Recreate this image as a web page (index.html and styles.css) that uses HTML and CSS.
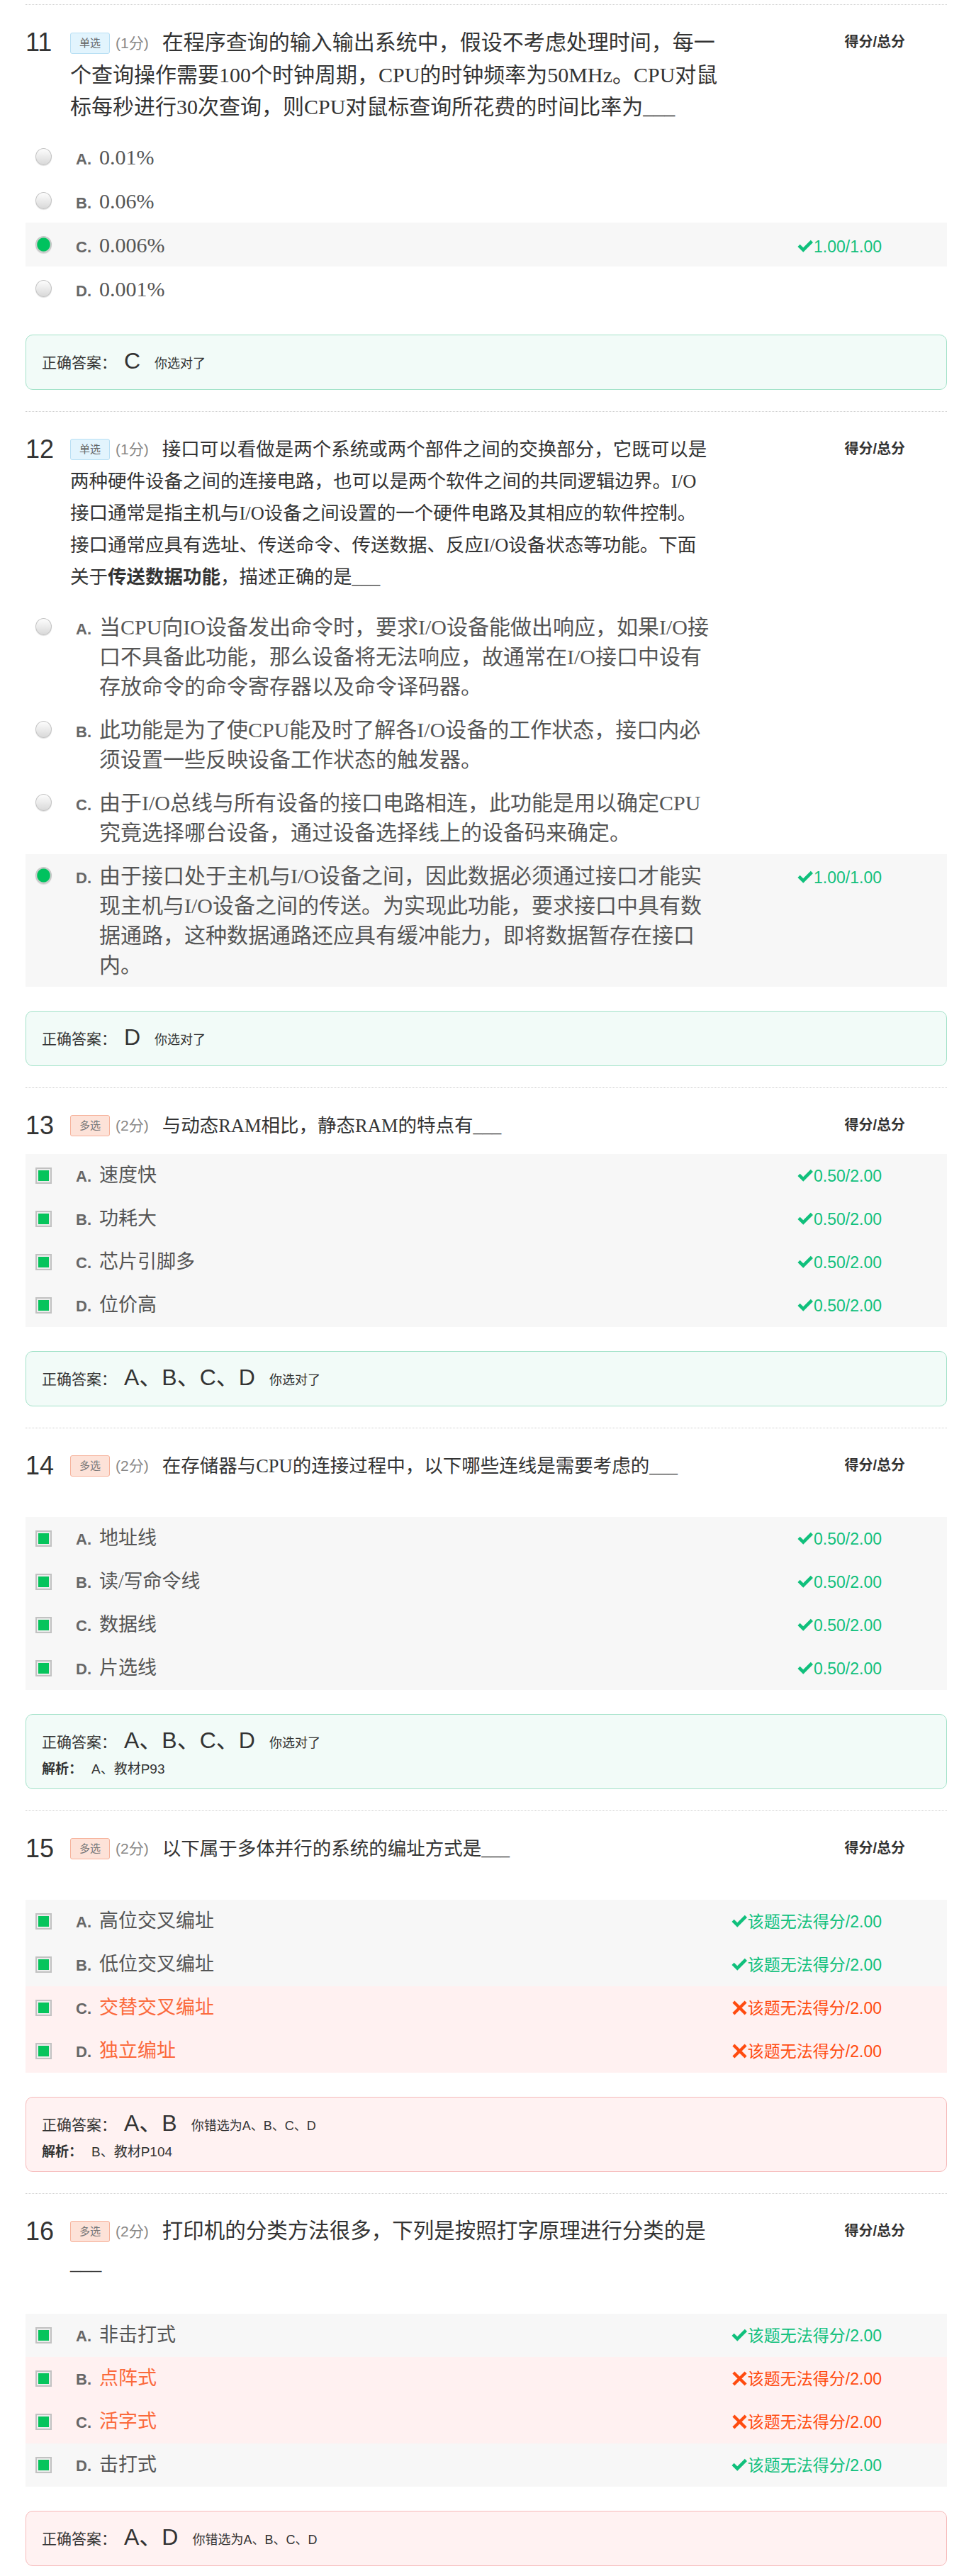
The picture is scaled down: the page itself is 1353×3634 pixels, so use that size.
FILE: index.html
```html
<!DOCTYPE html>
<html lang="zh-CN">
<head>
<meta charset="utf-8">
<title>测验结果</title>
<link rel="stylesheet" href="styles.css">
</head>
<body>
<div class="page">

  <!-- 11 -->
  <section class="question">
    <div class="q-head">
      <div class="q-num">11</div>
      <div class="q-title t30"><span class="badge single">单选</span><span class="pts">(1分)</span>在程序查询的输入输出系统中，假设不考虑处理时间，每一<br>个查询操作需要100个时钟周期，CPU的时钟频率为50MHz。CPU对鼠<br>标每秒进行30次查询，则CPU对鼠标查询所花费的时间比率为___</div>
      <div class="q-score">得分/总分</div>
    </div>
    <ul class="options">
      <li class="opt"><span class="radio"></span><span class="letter">A.</span><span class="opt-text t30">0.01%</span></li>
      <li class="opt"><span class="radio"></span><span class="letter">B.</span><span class="opt-text t30">0.06%</span></li>
      <li class="opt hl"><span class="radio on"></span><span class="letter">C.</span><span class="opt-text t30">0.006%</span><span class="score ok"><svg class="ico" viewBox="0 0 24 20"><path d="M0.5 10.5 L4 7 L9 12 L20.5 0.5 L24 4 L9 19 Z"/></svg>1.00/1.00</span></li>
      <li class="opt"><span class="radio"></span><span class="letter">D.</span><span class="opt-text t30">0.001%</span></li>
    </ul>
    <div class="answer">
      <div class="ans-line">正确答案：<span class="ans-key">C</span><span class="ans-note">你选对了</span></div>
    </div>
  </section>

  <!-- 12 -->
  <section class="question">
    <div class="q-head">
      <div class="q-num">12</div>
      <div class="q-title t265"><span class="badge single">单选</span><span class="pts">(1分)</span>接口可以看做是两个系统或两个部件之间的交换部分，它既可以是<br>两种硬件设备之间的连接电路，也可以是两个软件之间的共同逻辑边界。I/O<br>接口通常是指主机与I/O设备之间设置的一个硬件电路及其相应的软件控制。<br>接口通常应具有选址、传送命令、传送数据、反应I/O设备状态等功能。下面<br>关于<b>传送数据功能</b>，描述正确的是___</div>
      <div class="q-score">得分/总分</div>
    </div>
    <ul class="options long">
      <li class="opt"><span class="radio"></span><span class="letter">A.</span><span class="opt-text t30">当CPU向IO设备发出命令时，要求I/O设备能做出响应，如果I/O接<br>口不具备此功能，那么设备将无法响应，故通常在I/O接口中设有<br>存放命令的命令寄存器以及命令译码器。</span></li>
      <li class="opt"><span class="radio"></span><span class="letter">B.</span><span class="opt-text t30">此功能是为了使CPU能及时了解各I/O设备的工作状态，接口内必<br>须设置一些反映设备工作状态的触发器。</span></li>
      <li class="opt"><span class="radio"></span><span class="letter">C.</span><span class="opt-text t30">由于I/O总线与所有设备的接口电路相连，此功能是用以确定CPU<br>究竟选择哪台设备，通过设备选择线上的设备码来确定。</span></li>
      <li class="opt hl"><span class="radio on"></span><span class="letter">D.</span><span class="opt-text t30">由于接口处于主机与I/O设备之间，因此数据必须通过接口才能实<br>现主机与I/O设备之间的传送。为实现此功能，要求接口中具有数<br>据通路，这种数据通路还应具有缓冲能力，即将数据暂存在接口<br>内。</span><span class="score ok"><svg class="ico" viewBox="0 0 24 20"><path d="M0.5 10.5 L4 7 L9 12 L20.5 0.5 L24 4 L9 19 Z"/></svg>1.00/1.00</span></li>
    </ul>
    <div class="answer">
      <div class="ans-line">正确答案：<span class="ans-key">D</span><span class="ans-note">你选对了</span></div>
    </div>
  </section>

  <!-- 13 -->
  <section class="question">
    <div class="q-head">
      <div class="q-num">13</div>
      <div class="q-title t265"><span class="badge multi">多选</span><span class="pts">(2分)</span>与动态RAM相比，静态RAM的特点有___</div>
      <div class="q-score">得分/总分</div>
    </div>
    <ul class="options multi">
      <li class="opt hl"><span class="check"></span><span class="letter">A.</span><span class="opt-text t27">速度快</span><span class="score ok"><svg class="ico" viewBox="0 0 24 20"><path d="M0.5 10.5 L4 7 L9 12 L20.5 0.5 L24 4 L9 19 Z"/></svg>0.50/2.00</span></li>
      <li class="opt hl"><span class="check"></span><span class="letter">B.</span><span class="opt-text t27">功耗大</span><span class="score ok"><svg class="ico" viewBox="0 0 24 20"><path d="M0.5 10.5 L4 7 L9 12 L20.5 0.5 L24 4 L9 19 Z"/></svg>0.50/2.00</span></li>
      <li class="opt hl"><span class="check"></span><span class="letter">C.</span><span class="opt-text t27">芯片引脚多</span><span class="score ok"><svg class="ico" viewBox="0 0 24 20"><path d="M0.5 10.5 L4 7 L9 12 L20.5 0.5 L24 4 L9 19 Z"/></svg>0.50/2.00</span></li>
      <li class="opt hl"><span class="check"></span><span class="letter">D.</span><span class="opt-text t27">位价高</span><span class="score ok"><svg class="ico" viewBox="0 0 24 20"><path d="M0.5 10.5 L4 7 L9 12 L20.5 0.5 L24 4 L9 19 Z"/></svg>0.50/2.00</span></li>
    </ul>
    <div class="answer">
      <div class="ans-line">正确答案：<span class="ans-key">A、B、C、D</span><span class="ans-note">你选对了</span></div>
    </div>
  </section>

  <!-- 14 -->
  <section class="question">
    <div class="q-head spaced">
      <div class="q-num">14</div>
      <div class="q-title t265"><span class="badge multi">多选</span><span class="pts">(2分)</span>在存储器与CPU的连接过程中，以下哪些连线是需要考虑的___</div>
      <div class="q-score">得分/总分</div>
    </div>
    <ul class="options multi">
      <li class="opt hl"><span class="check"></span><span class="letter">A.</span><span class="opt-text t27">地址线</span><span class="score ok"><svg class="ico" viewBox="0 0 24 20"><path d="M0.5 10.5 L4 7 L9 12 L20.5 0.5 L24 4 L9 19 Z"/></svg>0.50/2.00</span></li>
      <li class="opt hl"><span class="check"></span><span class="letter">B.</span><span class="opt-text t27">读/写命令线</span><span class="score ok"><svg class="ico" viewBox="0 0 24 20"><path d="M0.5 10.5 L4 7 L9 12 L20.5 0.5 L24 4 L9 19 Z"/></svg>0.50/2.00</span></li>
      <li class="opt hl"><span class="check"></span><span class="letter">C.</span><span class="opt-text t27">数据线</span><span class="score ok"><svg class="ico" viewBox="0 0 24 20"><path d="M0.5 10.5 L4 7 L9 12 L20.5 0.5 L24 4 L9 19 Z"/></svg>0.50/2.00</span></li>
      <li class="opt hl"><span class="check"></span><span class="letter">D.</span><span class="opt-text t27">片选线</span><span class="score ok"><svg class="ico" viewBox="0 0 24 20"><path d="M0.5 10.5 L4 7 L9 12 L20.5 0.5 L24 4 L9 19 Z"/></svg>0.50/2.00</span></li>
    </ul>
    <div class="answer">
      <div class="ans-line">正确答案：<span class="ans-key">A、B、C、D</span><span class="ans-note">你选对了</span></div>
      <div class="analysis"><b>解析：</b>A、教材P93</div>
    </div>
  </section>

  <!-- 15 -->
  <section class="question">
    <div class="q-head spaced">
      <div class="q-num">15</div>
      <div class="q-title t265"><span class="badge multi">多选</span><span class="pts">(2分)</span>以下属于多体并行的系统的编址方式是___</div>
      <div class="q-score">得分/总分</div>
    </div>
    <ul class="options multi">
      <li class="opt hl"><span class="check"></span><span class="letter">A.</span><span class="opt-text t27">高位交叉编址</span><span class="score ok"><svg class="ico" viewBox="0 0 24 20"><path d="M0.5 10.5 L4 7 L9 12 L20.5 0.5 L24 4 L9 19 Z"/></svg>该题无法得分/2.00</span></li>
      <li class="opt hl"><span class="check"></span><span class="letter">B.</span><span class="opt-text t27">低位交叉编址</span><span class="score ok"><svg class="ico" viewBox="0 0 24 20"><path d="M0.5 10.5 L4 7 L9 12 L20.5 0.5 L24 4 L9 19 Z"/></svg>该题无法得分/2.00</span></li>
      <li class="opt bad"><span class="check"></span><span class="letter">C.</span><span class="opt-text t27">交替交叉编址</span><span class="score no"><svg class="ico" viewBox="0 0 22 22"><path d="M2 2 L20 20 M20 2 L2 20"/></svg>该题无法得分/2.00</span></li>
      <li class="opt bad"><span class="check"></span><span class="letter">D.</span><span class="opt-text t27">独立编址</span><span class="score no"><svg class="ico" viewBox="0 0 22 22"><path d="M2 2 L20 20 M20 2 L2 20"/></svg>该题无法得分/2.00</span></li>
    </ul>
    <div class="answer wrong">
      <div class="ans-line">正确答案：<span class="ans-key">A、B</span><span class="ans-note">你错选为A、B、C、D</span></div>
      <div class="analysis"><b>解析：</b>B、教材P104</div>
    </div>
  </section>

  <!-- 16 -->
  <section class="question">
    <div class="q-head spaced">
      <div class="q-num">16</div>
      <div class="q-title t295"><span class="badge multi">多选</span><span class="pts">(2分)</span>打印机的分类方法很多，下列是按照打字原理进行分类的是<br>___</div>
      <div class="q-score">得分/总分</div>
    </div>
    <ul class="options multi">
      <li class="opt hl"><span class="check"></span><span class="letter">A.</span><span class="opt-text t27">非击打式</span><span class="score ok"><svg class="ico" viewBox="0 0 24 20"><path d="M0.5 10.5 L4 7 L9 12 L20.5 0.5 L24 4 L9 19 Z"/></svg>该题无法得分/2.00</span></li>
      <li class="opt bad"><span class="check"></span><span class="letter">B.</span><span class="opt-text t27">点阵式</span><span class="score no"><svg class="ico" viewBox="0 0 22 22"><path d="M2 2 L20 20 M20 2 L2 20"/></svg>该题无法得分/2.00</span></li>
      <li class="opt bad"><span class="check"></span><span class="letter">C.</span><span class="opt-text t27">活字式</span><span class="score no"><svg class="ico" viewBox="0 0 22 22"><path d="M2 2 L20 20 M20 2 L2 20"/></svg>该题无法得分/2.00</span></li>
      <li class="opt hl"><span class="check"></span><span class="letter">D.</span><span class="opt-text t27">击打式</span><span class="score ok"><svg class="ico" viewBox="0 0 24 20"><path d="M0.5 10.5 L4 7 L9 12 L20.5 0.5 L24 4 L9 19 Z"/></svg>该题无法得分/2.00</span></li>
    </ul>
    <div class="answer wrong">
      <div class="ans-line">正确答案：<span class="ans-key">A、D</span><span class="ans-note">你错选为A、B、C、D</span></div>
    </div>
  </section>

</div>
</body>
</html>
```
FILE: styles.css
```css
html, body {
  margin: 0;
  padding: 0;
  background: #fff;
}

body {
  font-family: "Liberation Sans", "Noto Sans CJK SC", sans-serif;
  color: #333;
}

.page {
  width: 1300px;
  margin-left: 36px;
  padding-top: 6px;
}

.question {
  border-top: 1px dotted #cfcfcf;
  padding: 30px 0 30px;
}

/* ---------- header ---------- */
.q-head {
  display: flex;
  align-items: flex-start;
}

.q-head.spaced {
  padding-bottom: 32px;
}

.q-num {
  flex: none;
  width: 63px;
  font-family: "Liberation Sans", sans-serif;
  font-size: 36px;
  line-height: 45px;
  color: #333;
}

.q-title {
  flex: none;
  font-family: "Liberation Serif", "Noto Sans CJK SC", serif;
  line-height: 45px;
  color: #333;
  white-space: nowrap;
}

.q-title b {
  font-weight: bold;
}

.t30 { font-size: 30px; }
.t295 { font-size: 29.5px; }
.t27 { font-size: 27px; }
.t265 { font-size: 26.5px; }

.badge {
  display: inline-block;
  box-sizing: border-box;
  height: 30px;
  padding: 0 12px;
  border: 1px solid #b8dff4;
  border-radius: 3px;
  background: #e2f4fd;
  font-family: "Liberation Sans", "Noto Sans CJK SC", sans-serif;
  font-size: 15px;
  line-height: 28px;
  color: #666;
  vertical-align: 4px;
}

.badge.multi {
  background: #fde2d8;
  border-color: #f6b29b;
  color: #777;
}

.pts {
  margin: 0 19px 0 8px;
  font-family: "Liberation Sans", "Noto Sans CJK SC", sans-serif;
  font-size: 21px;
  color: #888;
  vertical-align: 2px;
}

.q-score {
  margin-left: auto;
  margin-right: 59px;
  font-size: 20px;
  font-weight: bold;
  line-height: 45px;
  color: #333;
  white-space: nowrap;
}

/* ---------- options ---------- */
.options {
  list-style: none;
  margin: 17px 0 0;
  padding: 0;
}

.opt {
  display: flex;
  align-items: baseline;
  padding: 9.5px 0 9.5px 14px;
}

.multi .opt {
  padding: 9px 0 9px 14px;
}

.opt.hl {
  background: #f7f7f7;
}

.opt.bad {
  background: #fff1f1;
}

.radio {
  flex: none;
  align-self: flex-start;
  box-sizing: border-box;
  width: 23px;
  height: 24px;
  margin-top: 9px;
  border: 1px solid #c4c4c4;
  border-radius: 50%;
  background: linear-gradient(#fdfdfd, #d9d9d9);
  box-shadow: 0 1px 1px rgba(0, 0, 0, 0.12);
}

.radio.on {
  background: radial-gradient(ellipse at center, #00c25e 0, #00c25e 58%, #cfcfcf 66%, #e4e4e4 100%);
}

.check {
  flex: none;
  align-self: flex-start;
  box-sizing: border-box;
  width: 23px;
  height: 23px;
  margin-top: 10px;
  border: 2px solid #c2c2c2;
  background: #06c45c;
  box-shadow: inset 0 0 0 2px #ececec;
}

.letter {
  flex: none;
  width: 33px;
  margin-left: 34px;
  font-family: "Liberation Sans", sans-serif;
  font-size: 22px;
  font-weight: bold;
  line-height: 1;
  color: #666;
}

.opt-text {
  font-family: "Liberation Serif", "Noto Sans CJK SC", serif;
  line-height: 43px;
  color: #555;
  white-space: nowrap;
}

.long .opt-text {
  line-height: 42px;
}

.long .radio {
  margin-top: 8.5px;
}

.bad .opt-text {
  color: #fb6a3c;
}

.score {
  margin-left: auto;
  margin-right: 92px;
  font-family: "Liberation Sans", "Noto Sans CJK SC", sans-serif;
  font-size: 23px;
  line-height: 1;
  white-space: nowrap;
}

.score.ok {
  color: #10c07c;
}

.score.no {
  color: #ff4b0f;
}

.ico {
  width: 22px;
  height: 19px;
  margin-right: 1px;
  vertical-align: -1px;
}

.score.ok .ico path {
  fill: #10c07c;
}

.score.no .ico {
  width: 21px;
  height: 21px;
  vertical-align: -2px;
}

.score.no .ico path {
  fill: none;
  stroke: #ff4b0f;
  stroke-width: 4.5;
}

/* ---------- answer box ---------- */
.answer {
  margin-top: 34px;
  padding: 17px 22px;
  border: 1px solid #a3e2c9;
  border-radius: 10px;
  background: #f2fbf8;
}

.answer.wrong {
  border-color: #f6b9b9;
  background: #fff2f2;
}

.ans-line {
  font-size: 21px;
  line-height: 38px;
  color: #333;
  white-space: nowrap;
}

.ans-key {
  margin: 0 20px 0 11px;
  font-size: 32px;
  vertical-align: -1px;
}

.ans-note {
  font-size: 18px;
}

.analysis {
  margin: 4px 0 -4px;
  font-size: 19px;
  line-height: 28px;
  color: #333;
}

.analysis b {
  margin-right: 13px;
}
```
